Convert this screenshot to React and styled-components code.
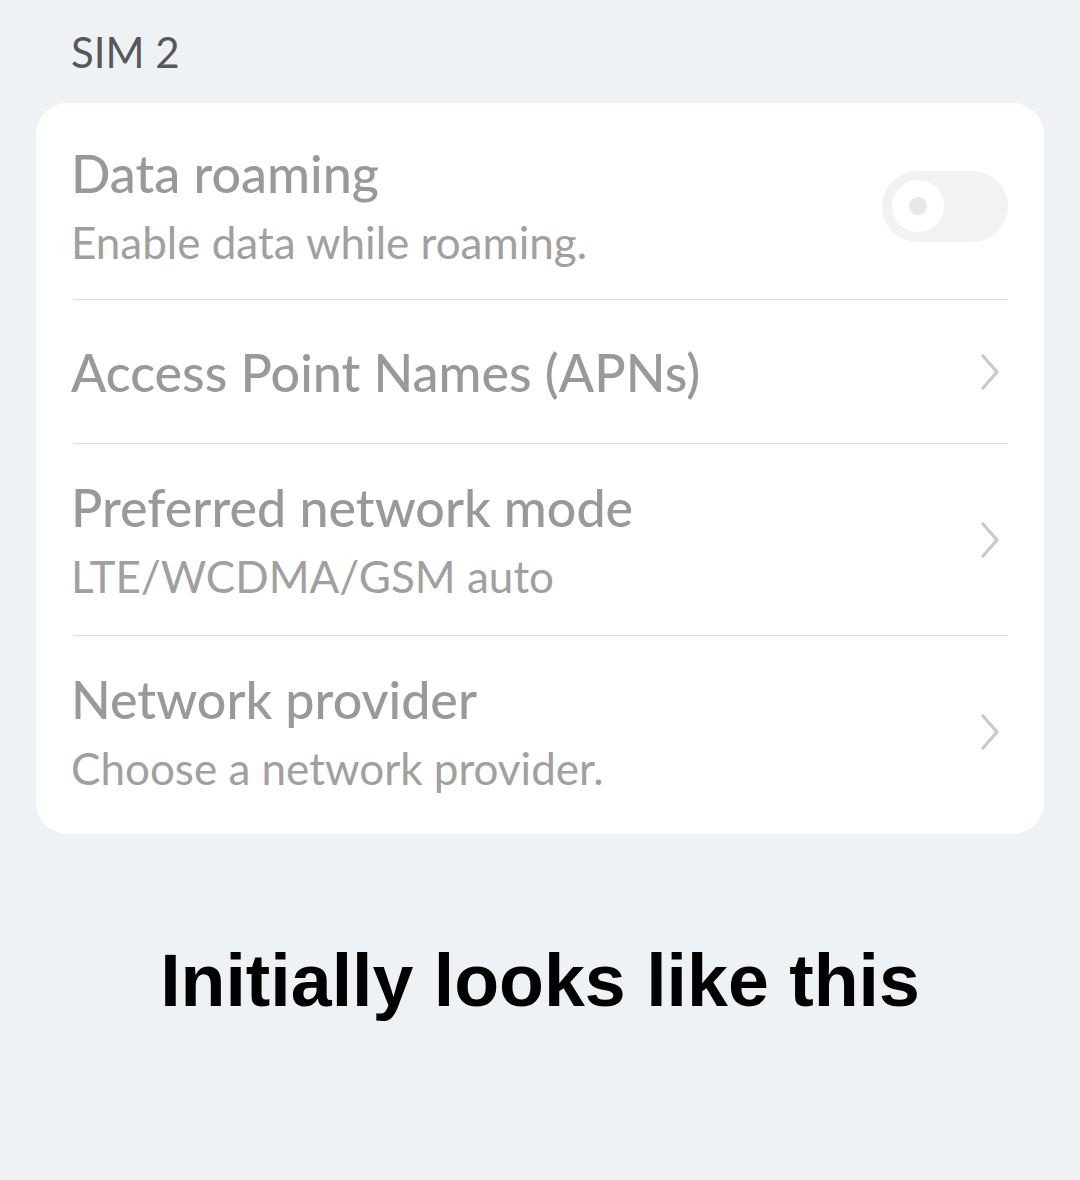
import React, { useState } from "react";
import styled, { createGlobalStyle } from "styled-components";

const GlobalStyle = createGlobalStyle`
  html, body {
    margin: 0;
    padding: 0;
    background: #eff2f5;
  }
  body {
    font-family: "Lato", "Noto Sans", sans-serif;
  }
`;

const items = [
  { id: "roaming", title: "Data roaming", sub: "Enable data while roaming.", toggle: true },
  { id: "apn", title: "Access Point Names (APNs)" },
  { id: "mode", title: "Preferred network mode", sub: "LTE/WCDMA/GSM auto" },
  { id: "provider", title: "Network provider", sub: "Choose a network provider." },
];

const Chevron = () => (
  <ChevronIcon width="24" height="40" viewBox="0 0 24 40" fill="none">
    <path d="M5 4 L19 20 L5 36" stroke="#c9c9c9" strokeWidth="3.4" strokeLinecap="round" strokeLinejoin="round" />
  </ChevronIcon>
);

const App = () => {
  const [roaming, setRoaming] = useState(false);

  return (
    <Page>
      <GlobalStyle />
      <SectionLabel>SIM 2</SectionLabel>
      <Card>
        {items.map((item, i) => (
          <Row key={item.id} $first={i === 0} $last={i === items.length - 1} $single={!item.sub}>
            <TextBlock>
              <Title>{item.title}</Title>
              {item.sub && <Subtitle>{item.sub}</Subtitle>}
            </TextBlock>
            {item.toggle ? (
              <Toggle $on={roaming} onClick={() => setRoaming(!roaming)}>
                <Knob $on={roaming} />
              </Toggle>
            ) : (
              <Chevron />
            )}
          </Row>
        ))}
      </Card>
      <Caption>Initially looks like this</Caption>
    </Page>
  );
};

export default App;

const Page = styled.div`
  width: 1080px;
  height: 1180px;
  background: #eff2f5;
  padding: 26px 36px 0;
  box-sizing: border-box;
`;

const SectionLabel = styled.div`
  font-size: 42px;
  color: #55585c;
  padding-left: 35px;
  line-height: 52px;
  margin-bottom: 25px;
`;

const Card = styled.div`
  background: #ffffff;
  border-radius: 32px;
  padding: 0 36px 0 35px;
`;

const rowHeight = ({ $single, $first, $last }) => {
  if ($single) return "144px";
  if ($first) return "197px";
  if ($last) return "198px";
  return "192px";
};

const Row = styled.div`
  display: flex;
  align-items: center;
  justify-content: space-between;
  height: ${rowHeight};
  border-bottom: ${({ $last }) => ($last ? "none" : "1px solid #dcdcdc")};
  box-sizing: border-box;
  padding-top: ${({ $first }) => ($first ? "10px" : "0")};
  padding-bottom: ${({ $last }) => ($last ? "6px" : "0")};
  margin-left: 2px;
`;

const TextBlock = styled.div`
  display: flex;
  flex-direction: column;
  gap: 12px;
  margin-left: -2px;
`;

const Title = styled.div`
  font-size: 52px;
  font-weight: 500;
  color: #999999;
  line-height: 60px;
`;

const Subtitle = styled.div`
  font-size: 44px;
  color: #a0a0a0;
  line-height: 54px;
`;

const ChevronIcon = styled.svg`
  margin-right: 6px;
`;

const Toggle = styled.div`
  width: 126px;
  height: 71px;
  border-radius: 36px;
  background: ${({ $on }) => ($on ? "#8fb8ff" : "#f2f2f2")};
  display: flex;
  align-items: center;
  padding: 0 10px;
  box-sizing: border-box;
  justify-content: ${({ $on }) => ($on ? "flex-end" : "flex-start")};
  cursor: pointer;
`;

const Knob = styled.div`
  width: 52px;
  height: 52px;
  border-radius: 50%;
  background: #ffffff;
  display: flex;
  align-items: center;
  justify-content: center;

  &::after {
    content: "";
    width: 18px;
    height: 18px;
    border-radius: 50%;
    background: #e8e8e8;
  }
`;

const Caption = styled.div`
  font-family: "Liberation Sans", Arial, sans-serif;
  font-weight: bold;
  font-size: 73.5px;
  line-height: 1;
  color: #000000;
  text-align: center;
  margin-top: 110px;
  margin-left: -36px;
  margin-right: -36px;
`;
